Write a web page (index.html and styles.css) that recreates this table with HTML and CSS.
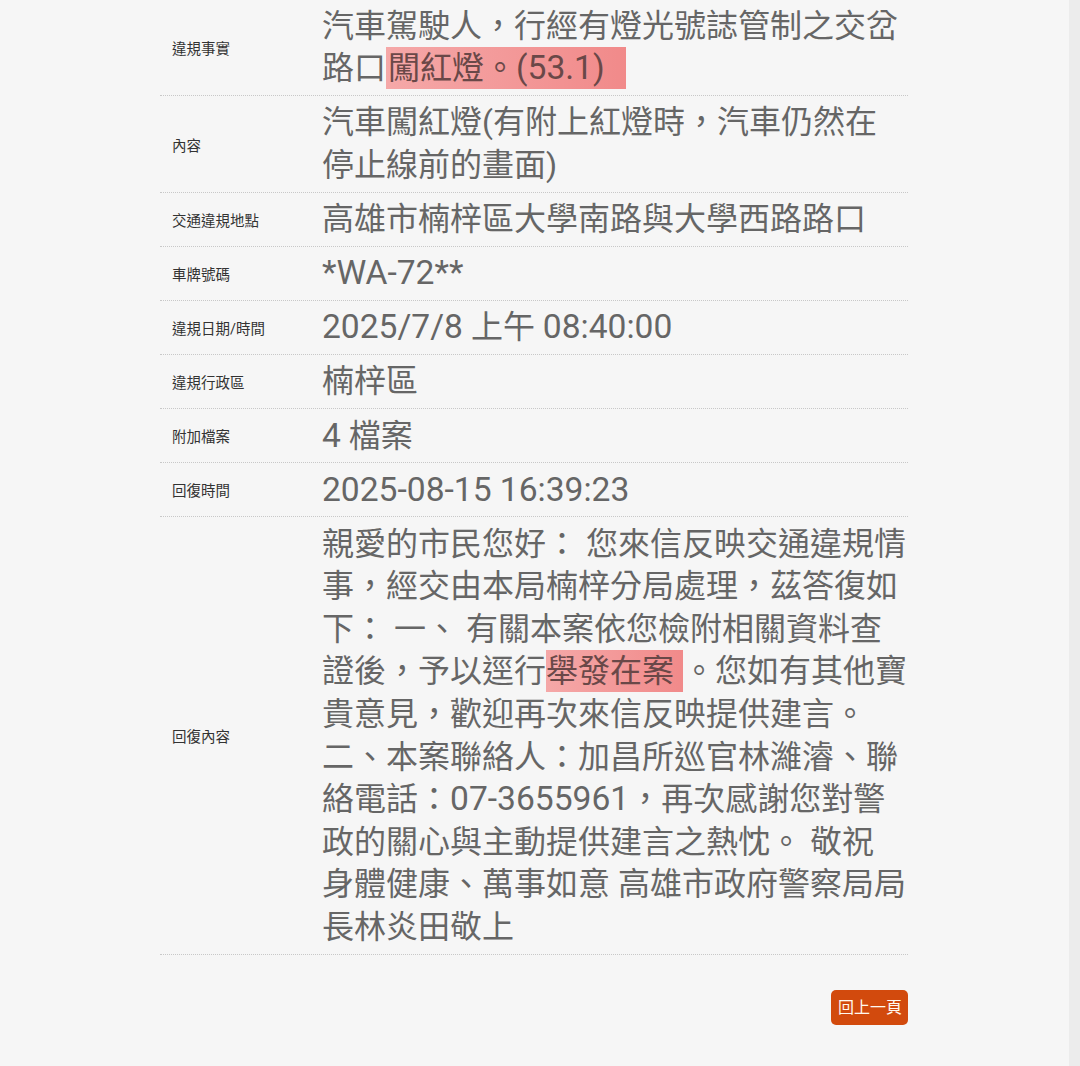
FILE: index.html
```html
<!DOCTYPE html>
<html lang="zh-Hant">
<head>
<meta charset="utf-8">
<title>案件內容</title>
<link rel="stylesheet" href="styles.css">
</head>
<body>
<div class="shell">
  <main class="page">
    <div class="table">
      <div class="row">
        <div class="label">違規事實</div>
        <div class="value">汽車駕駛人，行經有燈光號誌管制之交岔路口<span class="hl hl-wide">闖紅燈。<span class="lt">(53.1)</span></span></div>
      </div>
      <div class="row">
        <div class="label">內容</div>
        <div class="value">汽車闖紅燈(有附上紅燈時，汽車仍然在停止線前的畫面)</div>
      </div>
      <div class="row">
        <div class="label">交通違規地點</div>
        <div class="value">高雄市楠梓區大學南路與大學西路路口</div>
      </div>
      <div class="row">
        <div class="label">車牌號碼</div>
        <div class="value"><span class="lt">*WA-72**</span></div>
      </div>
      <div class="row">
        <div class="label">違規日期/時間</div>
        <div class="value"><span class="lt">2025/7/8</span> 上午 <span class="lt">08:40:00</span></div>
      </div>
      <div class="row">
        <div class="label">違規行政區</div>
        <div class="value">楠梓區</div>
      </div>
      <div class="row">
        <div class="label">附加檔案</div>
        <div class="value"><span class="lt">4</span> 檔案</div>
      </div>
      <div class="row">
        <div class="label">回復時間</div>
        <div class="value"><span class="lt">2025-08-15 16:39:23</span></div>
      </div>
      <div class="row">
        <div class="label">回復內容</div>
        <div class="value">親愛的市民您好： 您來信反映交通違規情事，經交由本局楠梓分局處理，茲答復如下： 一、 有關本案依您檢附相關資料查證後，予以逕行<span class="hl hl-short">舉發在案</span>。您如有其他寶貴意見，歡迎再次來信反映提供建言。<br>二、本案聯絡人：加昌所巡官林濰濬、聯絡電話：<span class="lt">07-3655961</span>，再次感謝您對警政的關心與主動提供建言之熱忱。 敬祝 身體健康、萬事如意 高雄市政府警察局局長林炎田敬上</div>
      </div>
    </div>
    <div class="actions">
      <a class="btn" href="#">回上一頁</a>
    </div>
  </main>
  <aside class="gutter"></aside>
</div>
</body>
</html>
```

FILE: styles.css
```css
html, body {
  margin: 0;
  padding: 0;
  background: #f6f6f6;
}
body {
  font-family: Roboto, "Noto Sans CJK TC", "Noto Sans", sans-serif;
}
.shell {
  display: flex;
  min-height: 100vh;
}
.page {
  flex: 1;
  padding-left: 160px;
  padding-right: 160px;
}
.gutter {
  width: 11px;
  background: #ececec;
}
.table {
  width: 748px;
  margin-top: -0.5px;
}
.row {
  display: grid;
  grid-template-columns: 150px 1fr;
  border-bottom: 1px dotted #c8c8c8;
}
.label {
  display: flex;
  align-items: center;
  padding-left: 12px;
  font-size: 14.5px;
  color: #333;
}
.value {
  padding: 5.25px 0 5.25px 12px;
  font-size: 32px;
  line-height: 42.6px;
  color: #666;
  word-break: break-all;
}
.lt {
  font-size: 33.6px;
}
.hl {
  background: linear-gradient(90deg, #f5a8a8, #f18a8a);
  color: #6a4848;
  padding: 2px 0;
}
.hl-wide {
  padding-left: 2px;
  padding-right: 21px;
}
.hl-short {
  padding-right: 9px;
}
.actions {
  display: flex;
  justify-content: flex-end;
  width: 748px;
  margin-top: 35px;
}
.btn {
  display: inline-block;
  background: #d24a0d;
  color: #fff8f0;
  font-size: 16px;
  line-height: 35px;
  padding: 0 6px 0 7px;
  border-radius: 5px;
  text-decoration: none;
}
```
